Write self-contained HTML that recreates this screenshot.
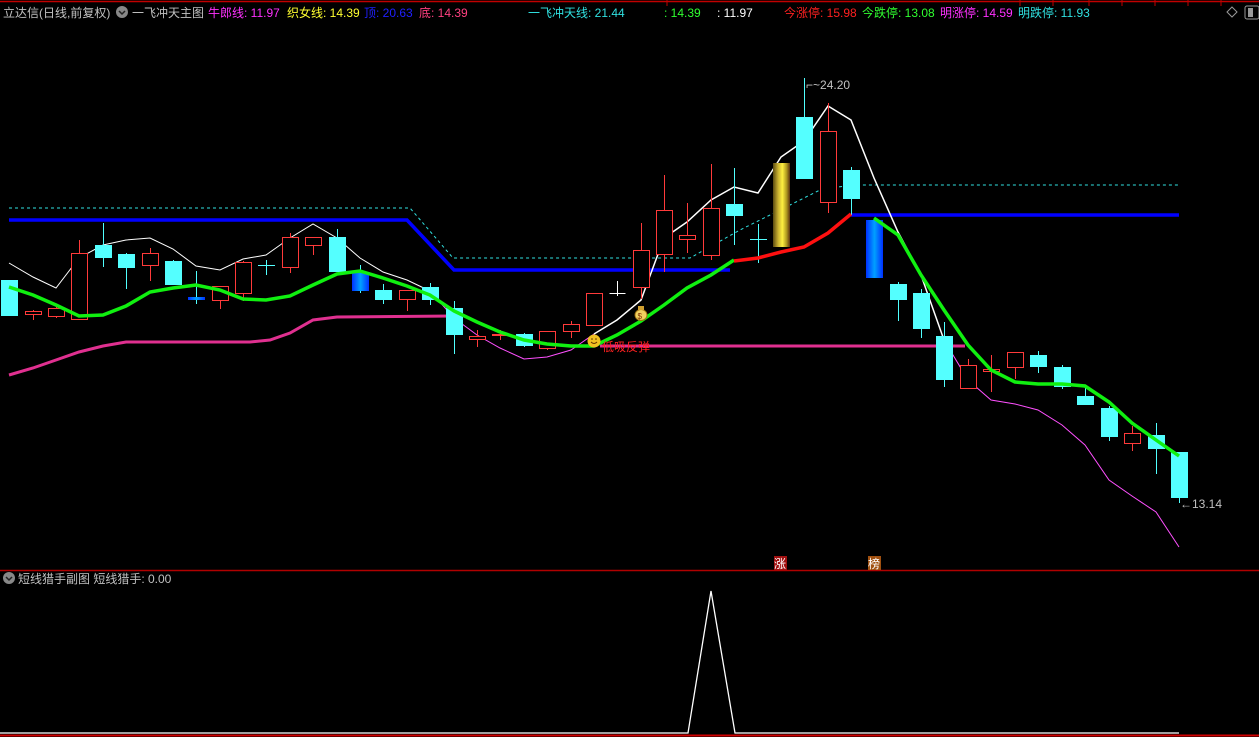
<!DOCTYPE html>
<html><head><meta charset="utf-8">
<style>
html,body{margin:0;padding:0;background:#000;width:1259px;height:737px;overflow:hidden}
svg{position:absolute;left:0;top:0}
.t{font-family:"Liberation Sans","Noto Sans CJK SC",sans-serif;font-size:12px}
</style></head><body>
<svg id="s" width="1259" height="737" xmlns="http://www.w3.org/2000/svg">
<defs>
<linearGradient id="gold" x1="0" x2="1"><stop offset="0" stop-color="#5a4a10"/><stop offset="0.3" stop-color="#c8b030"/><stop offset="0.55" stop-color="#fff040"/><stop offset="0.8" stop-color="#b09a20"/><stop offset="1" stop-color="#5a3010"/></linearGradient>
<linearGradient id="blu" x1="0" x2="1"><stop offset="0" stop-color="#0030ff"/><stop offset="0.5" stop-color="#00a0ff"/><stop offset="1" stop-color="#0030ff"/></linearGradient>
</defs>
<line x1="0" y1="1.5" x2="1259" y2="1.5" stroke="#c00000" stroke-width="1.5"/>
<g stroke="#c00000"><line x1="1020" y1="0" x2="1020" y2="6"/><line x1="1053" y1="0" x2="1053" y2="6"/><line x1="1089" y1="0" x2="1089" y2="6"/><line x1="1122" y1="0" x2="1122" y2="6"/><line x1="1155" y1="0" x2="1155" y2="6"/><line x1="1188" y1="0" x2="1188" y2="6"/><line x1="1221" y1="0" x2="1221" y2="6"/><line x1="667" y1="0" x2="667" y2="6"/></g>
<line x1="0" y1="570.5" x2="1259" y2="570.5" stroke="#b00000" stroke-width="1.5"/>
<line x1="0" y1="735.5" x2="1259" y2="735.5" stroke="#d00000" stroke-width="2"/>
<polyline points="0,733 688,733 711,591 735,733 1179,733" fill="none" stroke="#fff" stroke-width="1.3"/>
<g id="g"></g>
<text class="t" x="3" y="17" fill="#c0c0c0">立达信(日线,前复权)</text>
<circle cx="122" cy="12" r="6" fill="#888"/><path d="M119 11l3 3 3-3" stroke="#222" fill="none" stroke-width="1.5"/>
<text class="t" x="132" y="17" fill="#c0c0c0">一飞冲天主图</text>
<text class="t" x="208" y="17" fill="#ff30ff">牛郎线: 11.97</text>
<text class="t" x="287" y="17" fill="#ffff30">织女线: 14.39</text>
<text class="t" x="364" y="17" fill="#2020ff">顶: 20.63</text>
<text class="t" x="419" y="17" fill="#ff4080">底: 14.39</text>
<text class="t" x="528" y="17" fill="#30e0e0">一飞冲天线: 21.44</text>
<text class="t" x="664" y="17" fill="#30ff30">: 14.39</text>
<text class="t" x="717" y="17" fill="#ffffff">: 11.97</text>
<text class="t" x="784" y="17" fill="#ff2020">今涨停: 15.98</text>
<text class="t" x="862" y="17" fill="#30ff30">今跌停: 13.08</text>
<text class="t" x="940" y="17" fill="#ff30ff">明涨停: 14.59</text>
<text class="t" x="1018" y="17" fill="#30e0e0">明跌停: 11.93</text>
<path d="M1232 7l5 5-5 5-5-5z" fill="none" stroke="#999"/>
<rect x="1245" y="6" width="14" height="13" rx="2" fill="none" stroke="#999"/><rect x="1248" y="8" width="5" height="9" fill="#999"/>
<text class="t" x="806" y="89" fill="#c0c0c0">⌐~24.20</text>
<text class="t" x="1180" y="508" fill="#c0c0c0">←13.14</text>
<text class="t" x="602" y="351" fill="#ff2020">低吸反弹</text>
<circle cx="594" cy="341" r="6.5" fill="#f0c020"/><path d="M591 342q3 3 6 0" stroke="#603000" fill="none"/><circle cx="592" cy="339" r="0.8" fill="#603000"/><circle cx="596" cy="339" r="0.8" fill="#603000"/>
<ellipse cx="641" cy="315" rx="6" ry="5.5" fill="#f0d060" stroke="#a07010"/><rect x="638" y="306" width="6" height="4" fill="#d0a030"/><text x="637.5" y="319" font-size="8" fill="#803000" font-family="Liberation Sans">$</text>
<rect x="774" y="556" width="13" height="14" fill="#a01010"/><text class="t" x="774" y="568" fill="#fff">涨</text>
<rect x="868" y="556" width="13" height="14" fill="#a05010"/><text class="t" x="868" y="568" fill="#fff">榜</text>
<circle cx="9" cy="578" r="6" fill="#888"/><path d="M6 577l3 3 3-3" stroke="#222" fill="none" stroke-width="1.5"/>
<text class="t" x="18" y="583" fill="#c0c0c0">短线猎手副图  短线猎手: 0.00</text>
</svg>
<script>
var g=document.getElementById('g'),h='';
function pl(p,c,w,d){h+='<polyline points="'+p+'" fill="none" stroke="'+c+'" stroke-width="'+w+'"'+(d?' stroke-dasharray="'+d+'"':'')+'/>';}
pl('9,208 410,208 453,258 690,258 740,230 790,205 820,190 851,185 1179,185','#30e0e0',1,'3,3');
pl('9,375 33,368 56,360 79,352 103,346 126,342 250,342 270,340 290,333 313,320 337,317 454,316','#e03090',3);
pl('600,346 965,346','#e03090',3);
pl('9,220 407,220 454,270 730,270','#0000ff',3.5);
pl('851,215 1179,215','#0000ff',3.5);
pl('9,263 33,277 56,288 79,258 103,245 126,240 150,238 173,249 196,266 220,270 243,259 266,255 290,238 313,224 337,238 360,258 383,272 407,280 430,291','#fff',1);
pl('430,291 454,318 477,335 500,348 524,359 547,357 571,350 594,334','#ff50ff',1);
pl('594,334 617,320 641,300 664,238 687,222 711,200 734,187 758,193 781,157 804,141 828,106 851,120 874,178 898,232 921,275 944,340','#fff',1.5);
pl('944,340 968,380 991,400 1015,404 1038,410 1062,425 1085,445 1109,480 1132,496 1156,512 1179,547','#ff50ff',1);
var C=[[9,280,280,316,316,0],[33,310,311,314,320,1],[56,305,308,316,318,1],[79,240,253,319,320,1],[103,223,245,258,267,0],[126,253,254,268,289,0],[150,248,253,265,281,1],[173,260,261,285,285,0],[196,271,297,299,304,2],[220,286,286,300,309,1],[243,261,262,293,301,1],[266,260,265,265,275,0],[290,233,237,267,273,1],[313,237,237,245,255,1],[337,229,237,272,272,0],[360,265,272,291,293,3],[383,284,290,300,304,0],[407,290,290,299,311,1],[430,283,287,300,305,0],[454,301,308,335,354,0],[477,330,336,339,347,1],[500,330,334,334,340,1],[524,333,334,346,347,0],[547,331,331,348,350,1],[571,321,324,331,338,1],[594,293,293,325,326,1],[617,281,293,293,296,4],[641,223,250,287,299,1],[664,175,210,254,272,1],[687,203,235,239,253,1],[711,164,208,255,260,1],[734,168,204,216,245,0],[758,224,239,239,263,0],[781,163,163,247,247,5],[804,78,117,179,179,0],[828,103,131,202,213,1],[851,167,170,199,215,0],[874,220,220,278,278,3],[898,282,284,300,321,0],[921,289,293,329,338,0],[944,322,336,380,387,0],[968,359,365,388,388,1],[991,355,369,371,392,1],[1015,352,352,367,379,1],[1038,351,355,367,373,0],[1062,365,367,387,389,0],[1085,385,396,405,405,0],[1109,406,408,437,441,0],[1132,426,433,443,451,1],[1156,423,435,449,474,0],[1179,452,452,498,503,0]];
C.forEach(function(c){var x=c[0]+0.5,t=c[5],col=t==1?'#ff3a3a':(t==4?'#fff':'#50ffff');
h+='<line x1="'+x+'" y1="'+c[1]+'" x2="'+x+'" y2="'+c[4]+'" stroke="'+col+'" stroke-width="1"/>';
var bh=Math.max(c[3]-c[2],1);
if(t==1)h+='<rect x="'+(x-8)+'" y="'+(c[2]+0.5)+'" width="16" height="'+bh+'" fill="#000" stroke="#ff3a3a" stroke-width="1"/>';
else if(t==0)h+='<rect x="'+(c[0]-8)+'" y="'+c[2]+'" width="17" height="'+bh+'" fill="#54ffff"/>';
else if(t==4)h+='<line x1="'+(x-8)+'" y1="'+(c[2]+0.5)+'" x2="'+(x+8)+'" y2="'+(c[2]+0.5)+'" stroke="#fff" stroke-width="1"/>';
else if(t==2)h+='<rect x="'+(c[0]-8)+'" y="'+c[2]+'" width="17" height="3" fill="url(#blu)"/>';
else if(t==3)h+='<rect x="'+(c[0]-8)+'" y="'+c[2]+'" width="17" height="'+bh+'" fill="url(#blu)"/>';
else if(t==5)h+='<rect x="'+(c[0]-8)+'" y="'+c[2]+'" width="17" height="'+bh+'" fill="url(#gold)"/>';
});
pl('9,287 33,295 56,305 79,316 103,315 126,306 150,292 173,288 196,285 220,290 243,299 266,300 290,296 313,285 337,274 360,271 383,278 407,286 430,295 454,311 477,322 500,332 524,340 547,344 571,346 594,346 617,335 641,321 664,305 687,288 711,275 734,260','#10f010',3.5);
pl('734,261 758,258 781,252 804,247 828,233 851,214','#ff1010',3.5);
pl('874,218 898,235 921,275 944,310 968,345 991,370 1015,382 1038,384 1062,384 1085,386 1109,402 1132,423 1156,440 1179,456','#10f010',3.5);
g.innerHTML=h;
</script>
</body></html>
